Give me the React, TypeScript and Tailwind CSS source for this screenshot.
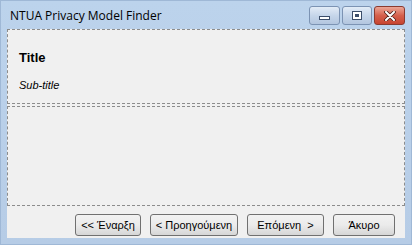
import React from "react";

const Btn = ({ w, children }: { w: string; children: React.ReactNode }) => (
  <div
    className={`${w} h-[22px] flex items-center justify-center rounded-[3px] border border-[#707070] bg-gradient-to-b from-[#f2f2f2] via-[#ebebeb] to-[#d6d6d6] text-[11px] text-black`}
    style={{ fontFamily: '"Liberation Sans", Arial, sans-serif' }}
  >
    {children}
  </div>
);

export default function App() {
  return (
    <div className="w-[412px] h-[245px] bg-gradient-to-b from-[#bcd3ec] to-[#b6cce6] flex flex-col overflow-hidden border border-[#9fb8d6]">
      <div className="h-[28px] flex items-start justify-between pl-[9px] pr-[6px]">
        <div
          className="mt-[6px] text-[12px] text-black"
          style={{ fontFamily: '"Open Sans", "Noto Sans", sans-serif' }}
        >
          NTUA Privacy Model Finder
        </div>
        <div className="flex mt-[5px] gap-[2px]">
          <div className="w-[31px] h-[19px] rounded-[3px] border border-[#7c93b3] bg-gradient-to-b from-[#e3ecf7] via-[#c6d6ea] to-[#b3c6df] flex items-center justify-center">
            <div className="w-[11px] h-[4px] border border-[#3c4e6a] bg-white mt-[5px]" />
          </div>
          <div className="w-[30px] h-[19px] rounded-[3px] border border-[#7c93b3] bg-gradient-to-b from-[#e3ecf7] via-[#c6d6ea] to-[#b3c6df] flex items-center justify-center">
            <div className="w-[10px] h-[9px] border border-[#3c4e6a] bg-white flex items-center justify-center">
              <div className="w-[4px] h-[3px] bg-[#3c4e6a]" />
            </div>
          </div>
          <div className="w-[31px] h-[19px] rounded-[3px] border border-[#8a3a30] bg-gradient-to-b from-[#eaa596] via-[#d5604c] to-[#c7432f] flex items-center justify-center">
            <svg width="12" height="10" viewBox="0 0 12 10">
              <path d="M2 1 L10 9 M10 1 L2 9" stroke="#4a2019" strokeWidth="3.6" strokeLinecap="round" />
              <path d="M2 1 L10 9 M10 1 L2 9" stroke="#ffffff" strokeWidth="2" strokeLinecap="round" />
            </svg>
          </div>
        </div>
      </div>
      <div className="flex-1 mx-[6px] mb-[6px] bg-[#f0f0f0] flex flex-col">
        <div className="h-[75px] border border-dashed border-[#8c8c8c] px-[11px] pt-[20px]">
          <div
            className="text-[13px] font-bold text-black leading-[16px]"
            style={{ fontFamily: '"Liberation Sans", Arial, sans-serif' }}
          >
            Title
          </div>
          <div
            className="mt-[13px] text-[11px] italic text-black leading-[13px]"
            style={{ fontFamily: '"Liberation Sans", Arial, sans-serif' }}
          >
            Sub-title
          </div>
        </div>
        <div className="h-[100px] mt-[2px] border border-dashed border-[#8c8c8c]" />
        <div className="flex-1 flex items-start pt-[8px] pl-[68px] gap-[9px]">
          <Btn w="w-[66px]">&lt;&lt; Έναρξη</Btn>
          <Btn w="w-[88px]">&lt; Προηγούμενη</Btn>
          <Btn w="w-[77px]">Επόμενη &nbsp;&gt;</Btn>
          <Btn w="w-[62px]">Άκυρο</Btn>
        </div>
      </div>
    </div>
  );
}
